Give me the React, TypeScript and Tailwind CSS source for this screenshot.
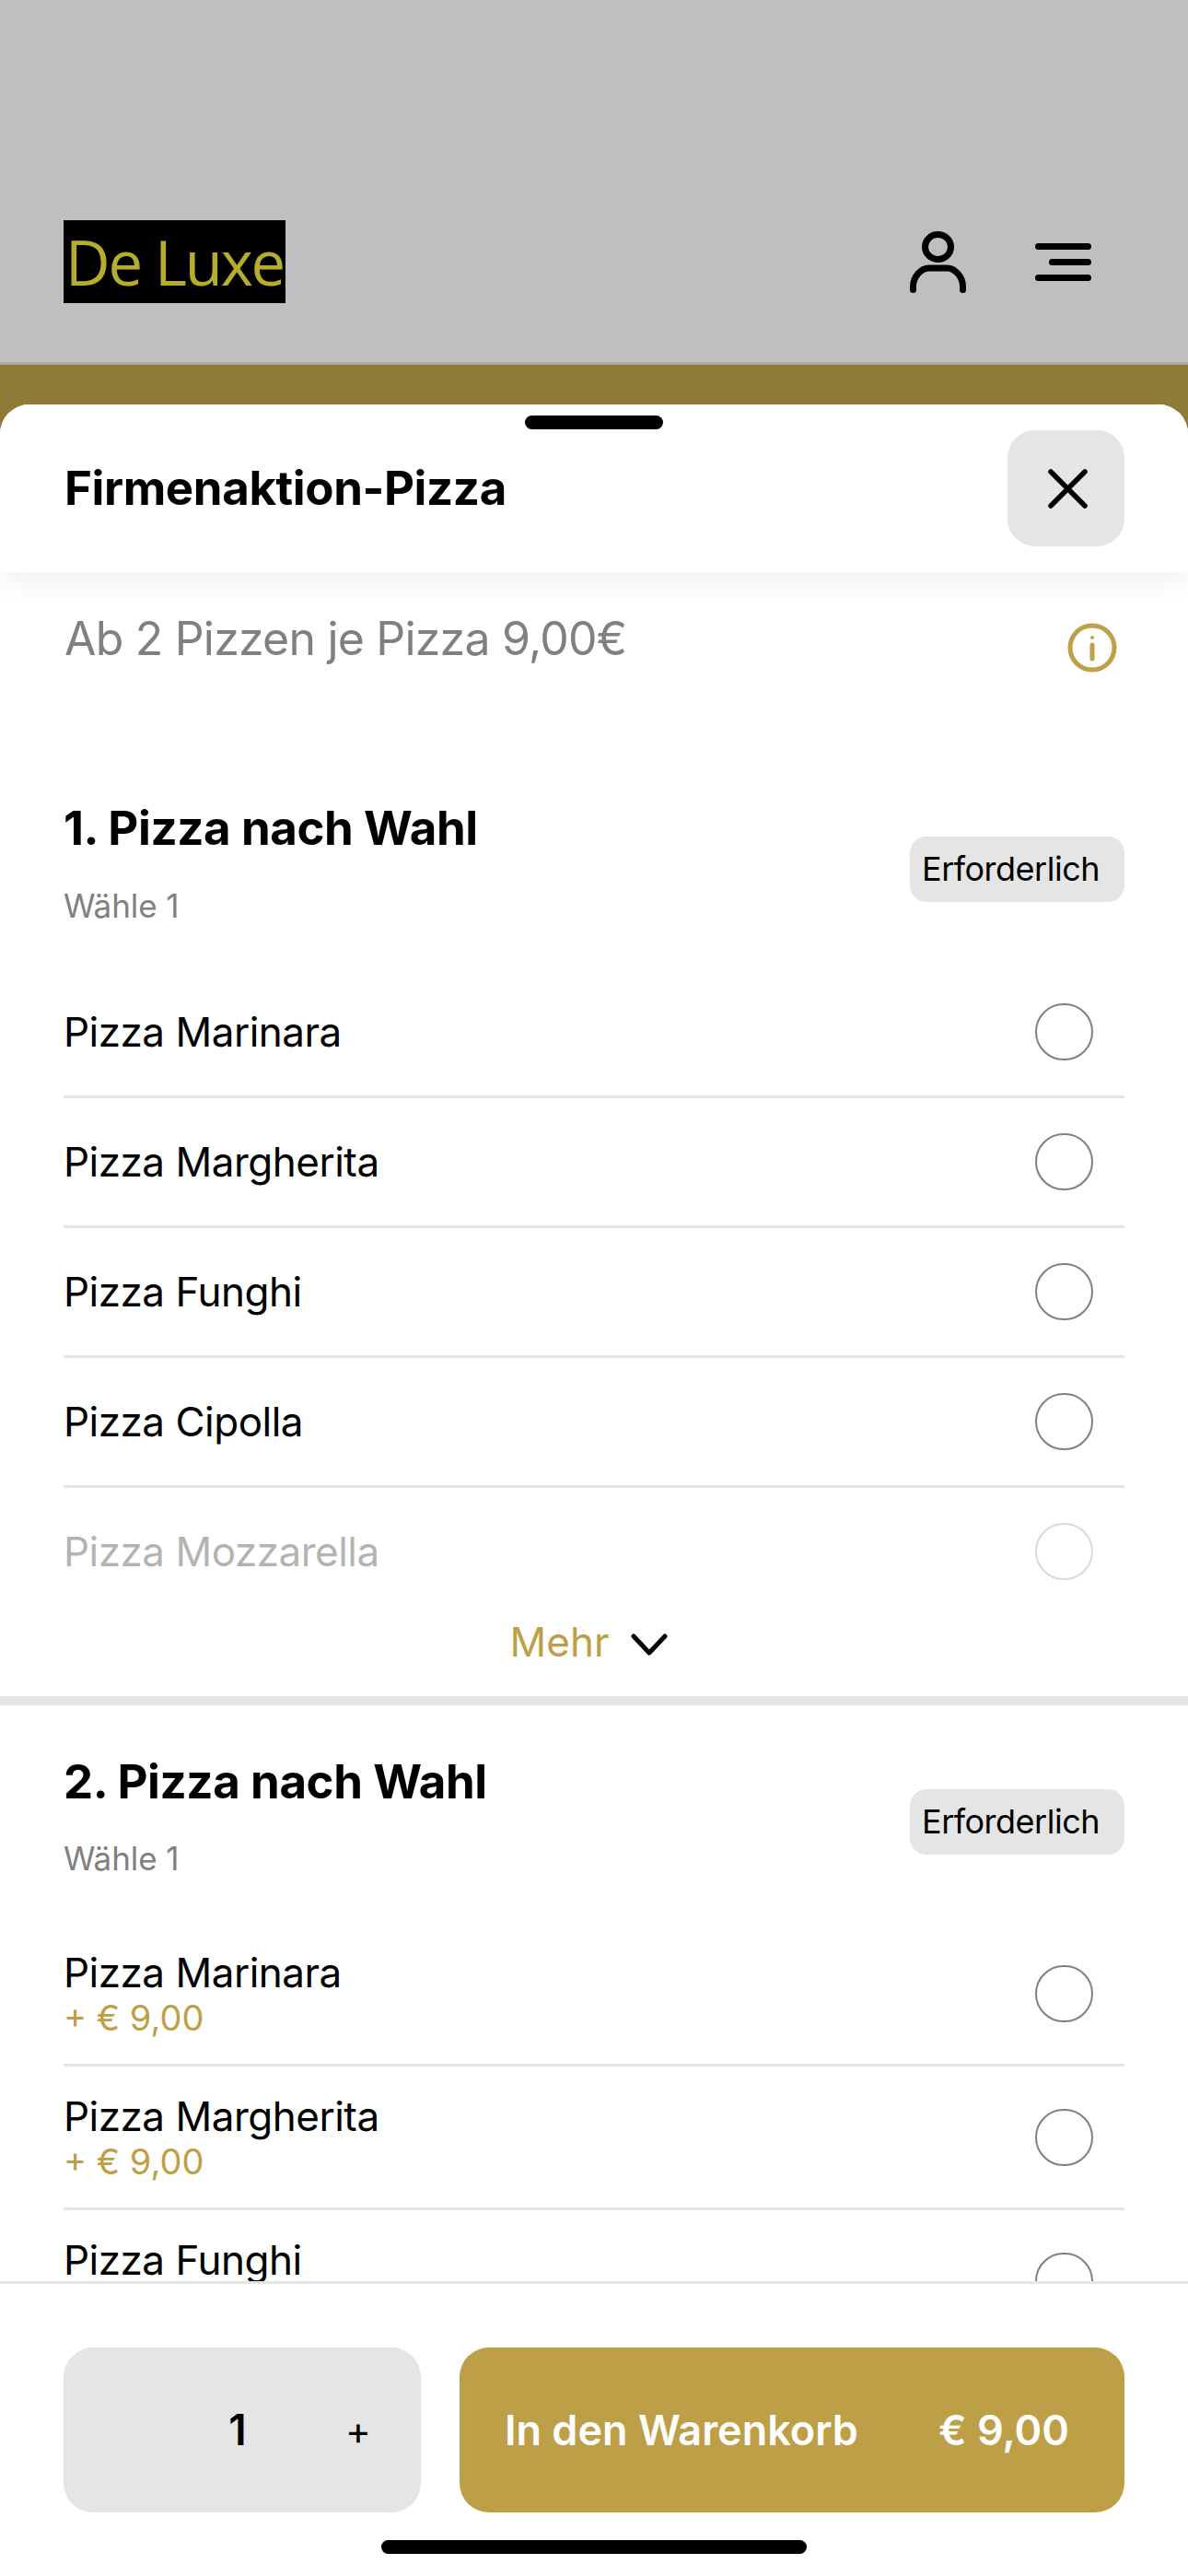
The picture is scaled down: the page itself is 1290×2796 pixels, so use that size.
const sans = "font-['Inter','Liberation_Sans',sans-serif]";

function Radio() {
  return <div className="w-[63px] h-[62px] shrink-0 rounded-full border-2 border-[#808080] bg-white" />;
}

function Row({ name, price, last }: { name: string; price?: string; last?: boolean }) {
  return (
    <div className={`flex items-center justify-between pr-[34px] border-b-[3px] ${price ? "h-[156px]" : "h-[141px]"} ${last ? "border-transparent" : "border-[#e5e5e5]"}`}>
      <div>
        <div className="text-[44px] leading-[52px] tracking-[-0.5px] text-black">{name}</div>
        {price && <div className="text-[38px] leading-[46px] text-[#bd9f47]">{price}</div>}
      </div>
      <Radio />
    </div>
  );
}

function Badge({ className }: { className: string }) {
  return (
    <div className={`${className} h-[71px] w-[233px] rounded-[18px] bg-[#e5e5e5] flex items-center pl-[13px] pb-[2px] text-[36px] tracking-[-0.5px] text-black`}>
      Erforderlich
    </div>
  );
}

function Title({ children }: { children: string }) {
  return <div className="text-[51px] leading-[62px] font-bold tracking-[-0.4px] text-black">{children}</div>;
}

export default function App() {
  const first = ["Pizza Marinara", "Pizza Margherita", "Pizza Funghi", "Pizza Cipolla"];
  return (
    <div className={`${sans} w-[1290px] h-[2796px] overflow-hidden flex flex-col bg-white`}>
      <header className="h-[396px] shrink-0 bg-[#bfbfbf] border-b-[3px] border-[#a9a9a9] flex items-end justify-between pl-[69px] pr-[105px] pb-[64px]">
        <div className="w-[241px] h-[90px] bg-black flex items-center justify-center overflow-hidden font-['Open_Sans',sans-serif] font-normal text-[67px] text-[#b5ad2b] tracking-[-2.2px]">
          De Luxe
        </div>
        <div className="flex items-center gap-[75px] mb-[11px]">
          <svg width="61" height="67" viewBox="0 0 61 67" fill="none" stroke="black" strokeWidth="7" strokeLinecap="round">
            <ellipse cx="30.5" cy="17" rx="14" ry="13.5" />
            <path d="M3.5 63.5V60c0-11 9-20 17-20h20c8 0 17 9 17 20v3.5" />
          </svg>
          <svg width="61" height="41" viewBox="0 0 61 41" fill="none" stroke="black" strokeWidth="7" strokeLinecap="round">
            <path d="M3.5 3.5h54M18.5 20.5h39M3.5 37.5h54" />
          </svg>
        </div>
      </header>
      <div className="flex-1 min-h-0 bg-[#8f7a38] pt-[43px] flex flex-col">
        <main className="relative flex-1 min-h-0 bg-white rounded-t-[32px] flex flex-col overflow-hidden">
          <div className="absolute z-20 top-[12px] left-[570px] w-[150px] h-[15px] rounded-full bg-black" />
          <div className="h-[182px] shrink-0 flex items-center justify-between pl-[70px] pr-[69px] relative z-10 bg-white shadow-[0_10px_30px_rgba(0,0,0,0.06)]">
            <h1 className="text-[51px] font-bold tracking-[-0.4px] text-black">Firmenaktion-Pizza</h1>
            <button className="w-[127px] h-[126px] mt-[-1px] rounded-[30px] bg-[#e5e5e5] flex items-center justify-center pl-[3px] pt-[2px]">
              <svg width="45" height="45" viewBox="0 0 45 45" fill="none" stroke="black" strokeWidth="5.5" strokeLinecap="round">
                <path d="M4 4l37 37M41 4L4 41" />
              </svg>
            </button>
          </div>
          <div className="flex-1 min-h-0 overflow-hidden">
            <div className="h-[194px] pl-[70px] pr-[69px] flex justify-between">
              <div className="pt-[42px] text-[50px] leading-[60px] tracking-[-0.8px] text-[#808080]">Ab 2 Pizzen je Pizza 9,00€</div>
              <svg className="mt-[55px] mr-[8px]" width="54" height="54" viewBox="0 0 54 54" fill="none" stroke="#bfa048" strokeWidth="5">
                <circle cx="27" cy="27" r="24" />
                <path d="M27 24v15" strokeLinecap="round" />
                <circle cx="27" cy="16" r="2" fill="#bfa048" stroke="none" />
              </svg>
            </div>
            <section className="px-[69px]">
              <div className="h-[236px] flex justify-between">
                <div className="pt-[53px]">
                  <Title>1. Pizza nach Wahl</Title>
                  <div className="mt-[32px] text-[35px] leading-[42px] tracking-[-0.1px] text-[#808080]">Wähle 1</div>
                </div>
                <Badge className="mt-[93px]" />
              </div>
              <div className="relative h-[706px] overflow-hidden">
                {first.map((n) => <Row key={n} name={n} />)}
                <Row name="Pizza Mozzarella" last />
                <div className="absolute left-0 right-0 bottom-0 h-[142px] bg-white/70" />
              </div>
              <div className="h-[84px] flex items-start justify-center gap-[24px] text-[44px] leading-[62px] text-[#bd9f47] pr-[11px]">
                <span className="-mt-[6px]">Mehr</span>
                <svg className="mt-[15px]" width="40" height="26" viewBox="0 0 40 26" fill="none" stroke="black" strokeWidth="5" strokeLinecap="round" strokeLinejoin="round">
                  <path d="M3 4l17 18L37 4" />
                </svg>
              </div>
            </section>
            <div className="h-[10px] bg-[#e5e5e5]" />
            <section className="px-[69px]">
              <div className="h-[236px] flex justify-between">
                <div className="pt-[52px]">
                  <Title>2. Pizza nach Wahl</Title>
                  <div className="mt-[31px] text-[35px] leading-[42px] tracking-[-0.1px] text-[#808080]">Wähle 1</div>
                </div>
                <Badge className="mt-[91px]" />
              </div>
              <Row name="Pizza Marinara" price="+ € 9,00" />
              <Row name="Pizza Margherita" price="+ € 9,00" />
              <Row name="Pizza Funghi" price="+ € 9,00" />
            </section>
          </div>
          <footer className="h-[320px] shrink-0 border-t-[3px] border-[#e5e5e5] bg-white relative px-[69px] pt-[69px] flex gap-[42px]">
            <div className="w-[388px] h-[179px] rounded-[32px] bg-[#e5e5e5] flex items-center text-black">
              <span className="ml-[177px] w-[24px] text-center text-[46px] font-semibold">1</span>
              <span className="ml-[105px] text-[42px]">+</span>
            </div>
            <button className="w-[722px] h-[179px] rounded-[32px] bg-[#bd9f47] flex items-center justify-between pl-[49px] pr-[60px] text-white text-[45px] font-semibold">
              <span>In den Warenkorb</span>
              <span>€ 9,00</span>
            </button>
            <div className="absolute left-[414px] bottom-[24px] w-[462px] h-[15px] rounded-full bg-black" />
          </footer>
        </main>
      </div>
    </div>
  );
}
